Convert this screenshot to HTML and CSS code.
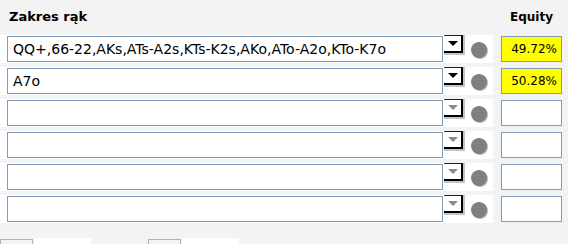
FILE: index.html
```html
<!DOCTYPE html>
<html lang="pl">
<head>
    <meta charset="UTF-8">
    <title>Equity</title>
    <link rel="stylesheet" href="styles.css">
</head>
<body>
    <div class="panel">
        <div class="head">
            <div class="head-range">Zakres rąk</div>
            <div class="head-equity">Equity</div>
        </div>

        <div class="row">
            <div class="cell">
                <div class="range">QQ+,66-22,AKs,ATs-A2s,KTs-K2s,AKo,ATo-A2o,KTo-K7o</div>
                <div class="drop"><span class="arrow"></span></div>
                <div class="dot-cell"><span class="dot"></span></div>
            </div>
            <div class="equity filled">49.72%</div>
        </div>
        <div class="row">
            <div class="cell">
                <div class="range">A7o</div>
                <div class="drop"><span class="arrow"></span></div>
                <div class="dot-cell"><span class="dot"></span></div>
            </div>
            <div class="equity filled">50.28%</div>
        </div>
        <div class="row">
            <div class="cell">
                <div class="range"></div>
                <div class="drop off"><span class="arrow"></span></div>
                <div class="dot-cell"><span class="dot"></span></div>
            </div>
            <div class="equity"></div>
        </div>
        <div class="row">
            <div class="cell">
                <div class="range"></div>
                <div class="drop off"><span class="arrow"></span></div>
                <div class="dot-cell"><span class="dot"></span></div>
            </div>
            <div class="equity"></div>
        </div>
        <div class="row">
            <div class="cell">
                <div class="range"></div>
                <div class="drop off"><span class="arrow"></span></div>
                <div class="dot-cell"><span class="dot"></span></div>
            </div>
            <div class="equity"></div>
        </div>
        <div class="row">
            <div class="cell">
                <div class="range"></div>
                <div class="drop off"><span class="arrow"></span></div>
                <div class="dot-cell"><span class="dot"></span></div>
            </div>
            <div class="equity"></div>
        </div>

        <div class="foot">
            <div class="opt"><span class="opt-box"></span><span class="opt-field"></span></div>
            <div class="opt"><span class="opt-box"></span><span class="opt-field"></span></div>
        </div>
    </div>
</body>
</html>
```

FILE: styles.css
```css
body {
    margin: 0;
    padding: 0;
    background-color: #f3f3f3;
    font-family: "DejaVu Sans", Verdana, sans-serif;
    font-size: 12px;
    color: #000;
    overflow: hidden;
}
.panel {
    width: 568px;
    height: 244px;
    overflow: hidden;
}
.head {
    display: grid;
    grid-template-columns: 493px 8px 61px;
    height: 35px;
}
.head-range {
    grid-column: 1;
    padding: 9px 0 0 9px;
    font-size: 13px;
    font-weight: bold;
}
.head-equity {
    grid-column: 3;
    padding-top: 10px;
    text-align: center;
    font-weight: bold;
}
.row {
    display: grid;
    grid-template-columns: 493px 61px;
    column-gap: 8px;
    height: 28px;
    margin-bottom: 4px;
}
.cell {
    display: flex;
    align-items: flex-start;
    background: #fff;
    padding: 1px 0 0 7px;
}
.range {
    box-sizing: border-box;
    width: 436px;
    height: 26px;
    border: 1px solid #7f9db9;
    background: #fff;
    padding: 4px 0 0 5px;
    font-size: 14px;
    white-space: nowrap;
    overflow: hidden;
}
.drop {
    box-sizing: border-box;
    width: 21px;
    height: 20px;
    margin-left: 1px;
    margin-top: -1px;
    background: #c4c4c4;
    padding: 0 2px 2px 0;
}
.drop .arrow {
    display: flex;
    align-items: center;
    justify-content: center;
    box-sizing: border-box;
    width: 19px;
    height: 18px;
    background: #fff;
    border-top: 1px solid #222;
    border-right: 2px solid #000;
    border-bottom: 2px solid #000;
}
.drop .arrow::after {
    content: "";
    border-left: 5px solid transparent;
    border-right: 5px solid transparent;
    border-top: 5px solid #000;
}
.drop.off .arrow::after {
    border-top-color: #8a8a8a;
}
.dot-cell {
    display: flex;
    align-items: center;
    justify-content: center;
    width: 28px;
    height: 27px;
}
.dot {
    width: 16px;
    height: 16px;
    border-radius: 50%;
    background: #808080;
    box-shadow: 1px 1px 0 #b8b8b8;
}
.equity {
    box-sizing: border-box;
    height: 26px;
    margin-top: 1px;
    border: 1px solid #7f9db9;
    background: #fff;
    text-align: right;
    padding: 5px 4px 0 0;
}
.equity.filled {
    background: #ffff00;
}
.foot {
    display: flex;
    gap: 57px;
    padding-top: 11px;
}
.opt {
    display: flex;
    align-items: flex-start;
}
.opt-box {
    box-sizing: border-box;
    width: 33px;
    height: 20px;
    margin-top: 1px;
    border: 1px solid #b4b4b4;
}
.opt-field {
    width: 57px;
    height: 20px;
    margin-left: 1px;
    background: #fff;
}
```
